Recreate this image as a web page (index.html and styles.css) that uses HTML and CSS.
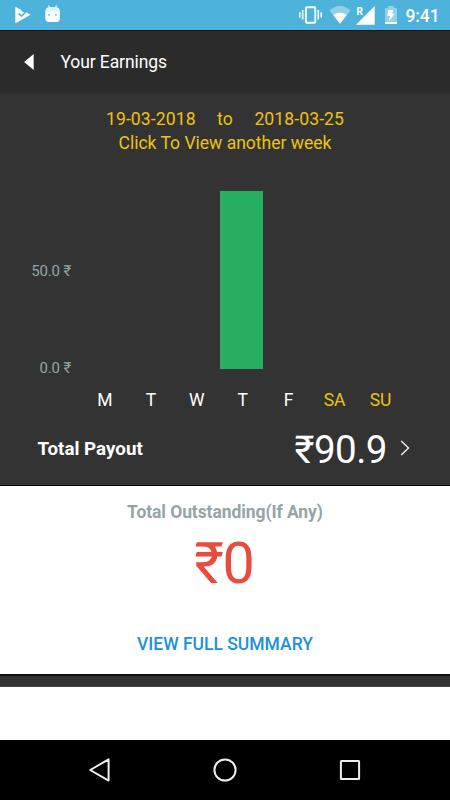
FILE: index.html
```
<!DOCTYPE html>
<html lang="en">
<head>
<meta charset="utf-8">
<title>Your Earnings</title>
<link rel="stylesheet" href="styles.css">
</head>
<body>
<div class="screen">
  <div class="status">
    <svg class="status-left" width="80" height="30" viewBox="0 0 80 30">
      <path d="M15.3 7.2Q15.3 6.5 16 6.9L20.5 9.5 22.5 12 26 12 30.5 14.8 16 22.9Q15.3 23.2 15.3 22.5Z" fill="#fff"/>
      <path d="M18.6 13.3l3 2.8 5.4-5.4" fill="none" stroke="#4db3da" stroke-width="1.6"/>
      <path d="M48.5 5.3l1.2 3.2M56.5 5.3l-1.2 3.2" stroke="#e2f4fb" stroke-width="1.1"/>
      <path d="M45.3 12q0-4.7 4.2-4.7h6.2q4.2 0 4.2 4.7v5.8q0 4.2-3.5 4.2h-7.6q-3.5 0-3.5-4.2z" fill="#fff"/>
      <path d="M45.8 11.5q.3-3.7 3.7-3.7h6.2q3.4 0 3.7 3.7z" fill="#def2fa"/>
      <circle cx="49" cy="14.8" r=".9" fill="#4db3da"/><circle cx="56" cy="14.8" r=".9" fill="#4db3da"/>
    </svg>
    <svg class="status-right" width="105" height="30" viewBox="295 0 105 30">
      <path d="M299.8 12.3v5.4M302.7 10v9.5M318.3 10v9.5M321.2 12.3v5.4" stroke="#f2fafd" stroke-width="1.6"/>
      <rect x="305.9" y="7.2" width="9.4" height="15.6" rx="1" fill="none" stroke="#fff" stroke-width="1.9"/>
      <path d="M329.4 10.3Q340 1.7 350.6 10.3L340 23.7Z" fill="#91d0e8"/>
      <path d="M333.3 15.1Q340 9.9 346.7 15.1L340 23.7Z" fill="#fff"/>
      <path d="M356 24.7L374.7 6V24.7Z" fill="#fff"/>
      <text x="356.4" y="15.2" class="roaming">R</text>
      <path d="M385 9q0-1.1 1-1.1h2.1V6h5.7v1.9h2.2q1 0 1 1.1v13h-12z" fill="#94d1e9"/>
      <path d="M385 22h12v1.2q0 .8-.8.8h-10.4q-.8 0-.8-.8z" fill="#fff"/>
      <path d="M388.3 10h5l-1.2 3.8h2.7l-5.8 7.5 1.1-5.6h-2.9z" fill="#fff"/>
    </svg>
    <span class="clock">9:41</span>
  </div>
  <div class="appbar">
    <svg width="12" height="18" viewBox="0 0 12 18"><path d="M.1 9L9.7 1V17Z" fill="#fff"/></svg>
    <span class="title">Your Earnings</span>
  </div>
  <div class="earnings">
    <div class="dates"><span>19-03-2018</span><span>to</span><span>2018-03-25</span></div>
    <div class="hint">Click To View another week</div>
    <div class="chart">
      <div class="axis"><span>50.0 ₹</span><span>0.0 ₹</span></div>
      <div class="plot"><i></i><i></i><i></i><i class="bar"></i><i></i><i></i><i></i></div>
    </div>
    <div class="days"><span>M</span><span>T</span><span>W</span><span>T</span><span>F</span><span class="weekend">SA</span><span class="weekend">SU</span></div>
    <div class="payout">
      <span class="payout-label">Total Payout</span>
      <span class="payout-value">₹90.9</span>
      <svg width="12" height="18" viewBox="0 0 12 18"><path d="M1.2 1L8.6 8 1.2 15" fill="none" stroke="#fff" stroke-width="1.2"/></svg>
    </div>
  </div>
  <div class="outstanding">
    <div class="out-label">Total Outstanding(If Any)</div>
    <div class="out-value">₹0</div>
    <div class="summary">VIEW FULL SUMMARY</div>
  </div>
  <div class="gap"></div>
  <div class="blank"></div>
  <div class="nav">
    <svg width="26" height="26" viewBox="0 0 26 26"><path d="M3.2 13L21.6 2.4V23.6Z"/></svg>
    <svg width="26" height="26" viewBox="0 0 26 26"><circle cx="13" cy="13" r="10.6"/></svg>
    <svg width="26" height="26" viewBox="0 0 26 26"><rect x="3.9" y="3.9" width="18.2" height="18.2" rx=".5"/></svg>
  </div>
</div>
</body>
</html>
```
FILE: styles.css
```
* { box-sizing: border-box; }
body { margin: 0; font-family: Roboto, "Noto Sans", sans-serif; }
svg { display: block; flex: none; }
.screen { width: 450px; height: 800px; display: flex; flex-direction: column; overflow: hidden; background: #333; white-space: nowrap; }
.status { height: 30px; display: flex; background: #4db3da; color: #fff; }
.status-right { margin-left: 215px; }
.roaming { font: bold 10px Roboto, sans-serif; fill: #fff; }
.clock { margin-left: 5.5px; font-size: 17.5px; font-weight: 500; line-height: 32px; letter-spacing: -.1px; }
.appbar { height: 64px; display: flex; align-items: center; padding-left: 24px; background: #2b2b2b; border-top: 1px solid #190c0b; border-bottom: 1px solid #2f2f2f; color: #fff; }
.title { margin-left: 24.5px; font-size: 17.5px; line-height: 24px; letter-spacing: -.1px; }
.earnings { height: 392px; padding-top: 13px; border-bottom: 1px solid #000; }
.dates { display: flex; justify-content: center; gap: 21.5px; font-size: 17.6px; line-height: 24px; letter-spacing: .08px; color: #eec211; }
.hint { text-align: center; font-size: 17.6px; line-height: 24px; letter-spacing: -.03px; color: #eec211; }
.chart { height: 178px; margin-top: 36px; display: flex; }
.axis { width: 71px; display: flex; flex-direction: column; align-items: flex-end; padding-top: 71px; gap: 78px; font-size: 15px; line-height: 19px; letter-spacing: -.15px; color: #95a5a6; }
.plot { width: 321px; margin-left: 11.5px; display: grid; grid-template-columns: repeat(7, 1fr); align-items: end; }
.bar { width: 42.5px; height: 178px; background: #27ae60; }
.days { margin: 18px 46.5px 0 82px; display: grid; grid-template-columns: repeat(7, 1fr); text-align: center; font-size: 17.5px; line-height: 26px; color: #fff; }
.weekend { color: #eec211; }
.payout { height: 72px; display: flex; align-items: center; padding: 0 38px; color: #fff; }
.payout-label { margin-left: -.5px; font-size: 18.75px; font-weight: 700; }
.payout-value { margin: 1px 13px 0 auto; font-size: 38.5px; letter-spacing: -.5px; }
.outstanding { height: 188px; padding-top: 13px; background: #fff; text-align: center; }
.out-label { font-size: 17.5px; line-height: 26px; font-weight: 700; letter-spacing: -.08px; color: #95a5a6; }
.out-value { margin-top: 8px; padding-right: 2.5px; font-size: 57.5px; line-height: 62px; letter-spacing: -1.5px; color: #e74c3c; }
.summary { margin-top: 36px; font-size: 17.5px; line-height: 26px; font-weight: 500; color: #1c91dc; }
.gap { height: 13px; border-top: 2px solid #111; border-bottom: 1px solid #444; background: #333; }
.blank { height: 53px; background: #fff; }
.nav { height: 60px; display: flex; align-items: center; justify-content: center; gap: 99px; background: #000; }
.nav svg { fill: none; stroke: #eee; stroke-width: 2; stroke-linejoin: round; }
```
